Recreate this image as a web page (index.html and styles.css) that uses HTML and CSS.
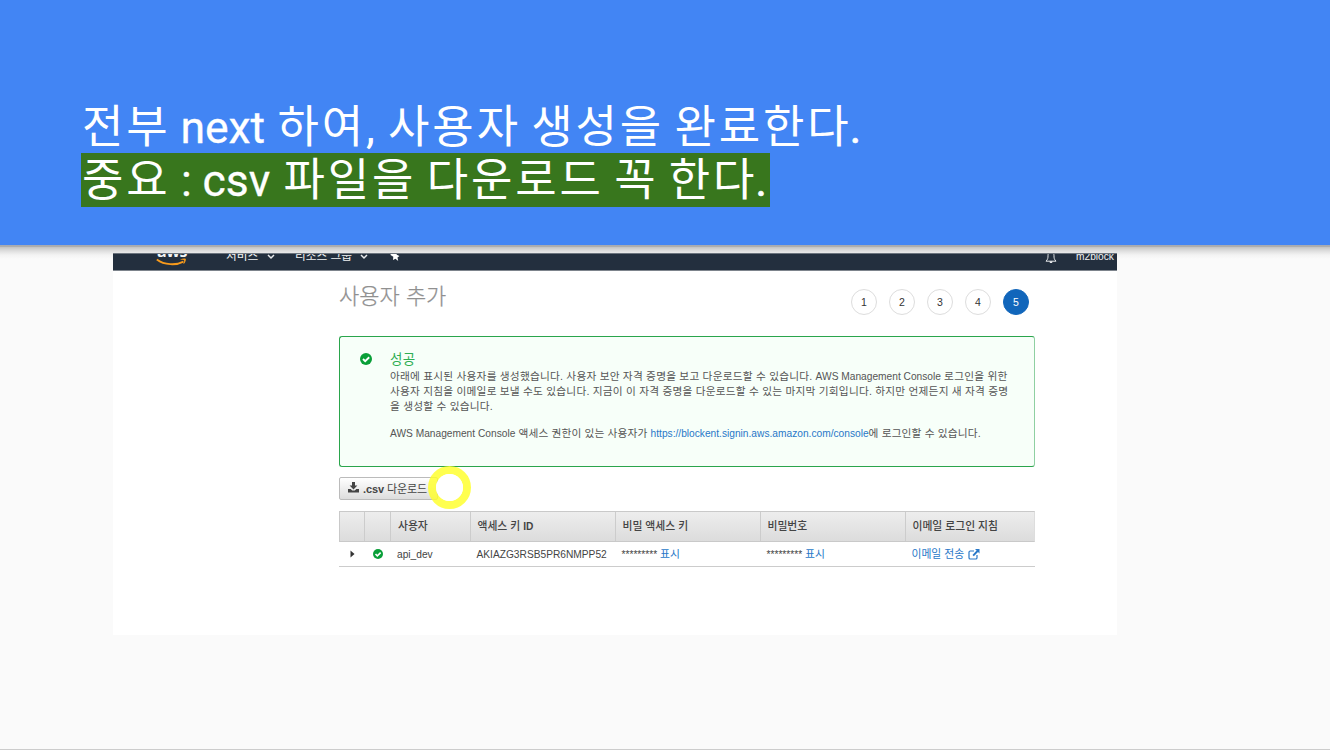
FILE: index.html
```html
<!DOCTYPE html>
<html lang="ko">
<head>
<meta charset="utf-8">
<title>사용자 추가</title>
<link rel="stylesheet" href="styles.css">
</head>
<body>
<main class="slide">
  <header class="hero">
    <h1 class="title">
      <span class="title-line">전부 <span class="latin">next</span> 하여, 사용자 생성을 완료한다<span class="stop">.</span></span>
      <span class="title-line marked">중요 <span class="latin colon">:</span> <span class="latin csv">csv</span> 파일을 다운로드 꼭 한다<span class="stop">.</span></span>
    </h1>
  </header>
  <div class="shade"></div>
  <section class="shot">
    <nav class="nav">
      <div class="brand">
        <span class="aws">aws</span>
        <svg class="smile" width="32" height="10" viewBox="0 0 32 10"><path d="M.8 1.500C8.500 7.200 20 7.600 27.500 3.600" fill="none" stroke="#f79a1c" stroke-width="1.800"/><path d="M24.500 1.400c2-1 4.800-1.100 5.300-.4.300.9-.4 3.600-2 5l-.4-.3c.6-1.300 1-2.800.7-3.300-.5-.5-2.200-.6-3.500-.5z" fill="#f79a1c"/></svg>
      </div>
      <span class="nav-item services">서비스</span>
      <svg class="chev c1" width="8" height="6" viewBox="0 0 8 6"><path d="M1 1l3 3 3-3" fill="none" stroke="#e8eaec" stroke-width="1.500"/></svg>
      <span class="nav-item groups">리소스 그룹</span>
      <svg class="chev c2" width="8" height="6" viewBox="0 0 8 6"><path d="M1 1l3 3 3-3" fill="none" stroke="#e8eaec" stroke-width="1.500"/></svg>
      <svg class="pin" width="10" height="10" viewBox="0 0 10 10"><path d="M1 0h5l.8 2.700 2.700 1.300-2 1.500.7 3.600-2.700-2.300-2.500 1.300.300-3.300L.5 3z" fill="#fff"/></svg>
      <svg class="bell" width="12" height="13" viewBox="0 0 12 13"><path d="M1 10.200c2-2 2-3.500 2-5.400C3 1.500 4.500 1 6 1s3 .5 3 3.800c0 1.900 0 3.400 2 5.400z" fill="none" stroke="#e6e8ea"/><path d="M4.500 10.500h3a1.500 1.500 0 0 1-3 0z" fill="#fff"/></svg>
      <span class="account">m2block</span>
    </nav>
    <div class="content">
      <div class="page-head">
        <h2 class="page-title">사용자 추가</h2>
        <ol class="steps">
          <li class="step">1</li><li class="step">2</li><li class="step">3</li><li class="step">4</li><li class="step active">5</li>
        </ol>
      </div>
      <div class="alert">
        <svg class="ok ok-big" viewBox="0 0 12 12"><circle cx="6" cy="6" r="6" fill="#099f38"/><path d="M3 6l2.200 2.200L9.200 4.300" fill="none" stroke="#fff" stroke-width="1.900"/></svg>
        <div class="alert-text">
          <h3 class="alert-title">성공</h3>
          <p class="para">
            <span class="row">아래에 표시된 사용자를 생성했습니다. 사용자 보안 자격 증명을 보고 다운로드할 수 있습니다. <span class="en">AWS Management Console</span> 로그인을 위한</span>
            <span class="row">사용자 지침을 이메일로 보낼 수도 있습니다. 지금이 이 자격 증명을 다운로드할 수 있는 마지막 기회입니다. 하지만 언제든지 새 자격 증명</span>
            <span class="row">을 생성할 수 있습니다.</span>
          </p>
          <p class="para">
            <span class="row last"><span class="en">AWS Management Console</span> 액세스 권한이 있는 사용자가 <a class="link en">https://blockent.signin.aws.amazon.com/console</a>에 로그인할 수 있습니다.</span>
          </p>
        </div>
      </div>
      <div class="actions">
        <div class="button">
          <svg class="dl" width="11" height="11" viewBox="0 0 11 11"><path d="M4 0h3v3.600h2.400L5.500 7.500 1.600 3.600H4z" fill="#444"/><path d="M0 7h2.700l1.500 1.400h2.600L8.300 7H11v3.500H0z" fill="#444"/></svg>
          <span class="button-label"><b>.csv</b> 다운로드</span>
          <span class="ring"></span>
        </div>
      </div>
      <div class="table">
        <div class="tr head">
          <span class="cell"></span><span class="cell"></span><span class="cell">사용자</span><span class="cell">액세스 키 <b>ID</b></span><span class="cell">비밀 액세스 키</span><span class="cell">비밀번호</span><span class="cell">이메일 로그인 지침</span>
        </div>
        <div class="tr data">
          <span class="cell icon-cell"><svg width="5" height="8" viewBox="0 0 5 8"><path d="M.5.500L4.500 4l-4 3.500z" fill="#333"/></svg></span>
          <span class="cell icon-cell"><svg class="ok ok-small" viewBox="0 0 12 12"><circle cx="6" cy="6" r="6" fill="#099f38"/><path d="M3 6l2.200 2.200L9.200 4.300" fill="none" stroke="#fff" stroke-width="1.900"/></svg></span>
          <span class="cell user">api_dev</span>
          <span class="cell key">AKIAZG3RSB5PR6NMPP52</span>
          <span class="cell"><span class="stars">*********</span> <a class="link show">표시</a></span>
          <span class="cell"><span class="stars">*********</span> <a class="link show">표시</a></span>
          <span class="cell"><a class="link mail">이메일 전송</a><svg class="ext" width="12" height="11" viewBox="0 0 12 11"><path d="M6 2H2.300Q1 2 1 3.300V8.700Q1 10 2.300 10H7.700Q9 10 9 8.700V6" fill="none" stroke="#2878c8" stroke-width="1.200"/><path d="M7 0h4.500v4.500L10 3 5.800 7.200 4.500 5.900 8.600 1.600z" fill="#2878c8"/></svg></span>
        </div>
      </div>
    </div>
  </section>
</main>
</body>
</html>
```

FILE: styles.css
```css
* { box-sizing: border-box; margin: 0; padding: 0; }
body { width: 1330px; height: 750px; overflow: hidden; background: #fafafa; font-family: "Liberation Sans", "Noto Sans CJK KR", sans-serif; }
.slide { height: 750px; border-bottom: 1px solid #ccc; }
.hero { height: 245px; padding: 100px 0 0 81px; background: #4285f4; }
.shade { height: 14px; background: linear-gradient(#a4a9b4 0, #adadad 1.5px, #c6c6c6 2.5px, #d2d2d2 4px, #e4e4e4 7px, #f3f3f3 10px, #fafafa 14px); }
.title { display: flex; flex-direction: column; align-items: flex-start; font: 400 45px/53px Roboto, "Noto Sans CJK KR", sans-serif; letter-spacing: 2.9px; word-spacing: -3.8px; color: #fff; white-space: nowrap; }
.title-line { height: 53px; padding-left: 1px; line-height: 55px; }
.latin { margin: 0 2px 0 -.5px; font-size: 44.5px; letter-spacing: 0; -webkit-text-stroke: .3px #fff; }
.csv { margin: 0 3px 0 .5px; }
.colon { margin: 0; }
.stop { margin-left: -2px; -webkit-text-stroke: .6px #fff; }
.marked { height: 54px; background: #38761d; }
.shot { position: relative; display: flex; flex-direction: column; width: 1004px; height: 382px; margin: -6px 0 0 113px; background: #fff; overflow: hidden; }
.nav { display: flex; align-items: flex-start; height: 18px; background: #232f3e; border-top: 1px solid #6b737d; border-bottom: 1px solid #7d848c; overflow: hidden; color: #f2f3f4; font-size: 11.7px; line-height: 14px; white-space: nowrap; }
.brand { display: flex; flex-direction: column; width: 32px; margin: -10px 0 0 43px; }
.aws { height: 14px; padding-left: 1px; font: 700 16px/15px "Open Sans", sans-serif; letter-spacing: -.4px; }
.smile { display: block; }
.nav-item { margin-top: -5px; }
.services { width: 33px; margin-left: 38px; }
.groups { width: 58px; margin-left: 20px; }
.chev { margin-top: 0; }
.c1 { margin-left: 8px; }
.c2 { margin-left: 7px; }
.pin { margin: -2px 0 0 22px; }
.bell { margin: -3px 0 0 auto; }
.account { width: 41px; margin: -4px 0 0 19px; font-size: 10.2px; }
.content { width: 696px; margin-left: 226px; }
.page-head { display: flex; justify-content: space-between; height: 65px; padding-right: 6px; }
.page-title { margin-top: 8px; font: 300 22px/30px "Noto Sans CJK KR", sans-serif; color: #909090; -webkit-text-stroke: .25px #909090; white-space: nowrap; }
.steps { display: flex; gap: 12px; margin-top: 18px; list-style: none; }
.step { width: 26px; height: 26px; border: 1px solid #ddd; border-radius: 50%; font-size: 10.500px; line-height: 25px; text-align: center; color: #333; }
.step.active { border-color: #1166bb; background: #1166bb; color: #fff; }
.alert { display: flex; height: 131px; padding: 15px 0 0 20px; border: 1px solid #2aa54c; border-right-color: #8fd0a2; border-radius: 3px; background: #f7fff9; }
.ok { display: block; flex: none; }
.ok-big { width: 12px; height: 12px; margin-top: 1px; }
.ok-small { width: 10px; height: 10px; }
.alert-text { margin-left: 18px; font-size: 10.700px; line-height: 15px; letter-spacing: .2px; color: #555; white-space: nowrap; }
.last { letter-spacing: .14px; }
.en { font-size: 10.200px; letter-spacing: 0; }
.alert-title { height: 17px; font-size: 13.500px; font-weight: 400; line-height: 16px; letter-spacing: .3px; color: #2fae54; }
.para { margin-bottom: 12px; }
.row { display: block; height: 15px; }
.link { color: #2878c8; text-decoration: none; }
.actions { display: flex; height: 44px; padding-top: 10px; }
.button { position: relative; display: flex; align-items: center; width: 99px; height: 23px; padding: 0 0 2px 8px; border: 1px solid #bbb; border-radius: 2px; background: linear-gradient(#fff, #ddd); font-size: 11px; color: #444; white-space: nowrap; }
.button-label { margin-left: 4px; letter-spacing: -.1px; }
.ring { position: absolute; left: 88px; top: -12px; width: 43px; height: 43px; border: 8px solid rgba(255,255,40,.82); border-radius: 50%; }
.ring::before { content: ""; position: absolute; inset: 0; border-radius: 50%; background: #fff; }
.table { width: 696px; font-size: 10.200px; color: #444; white-space: nowrap; }
.tr { display: grid; grid-template-columns: 25px 26px 79.500px 145px 145px 145px 1fr; }
.head { height: 31px; border: 1px solid #c9c9c9; border-right-color: #ddd; background: linear-gradient(#ededed, #dcdcdc); font-size: 10.800px; font-weight: 500; line-height: 29px; }
.head b { font-size: 10.200px; }
.head .cell { padding-left: 7px; border-right: 1px solid #ccc; }
.head .cell:last-child { border-right: 0; }
.data { height: 25px; padding-left: 1px; border-bottom: 1px solid #ccc; line-height: 24px; }
.data .cell { padding-left: 6px; }
.data .icon-cell { display: flex; align-items: center; justify-content: center; height: 24px; padding: 0; }
.user, .key { line-height: 25px; }
.show, .mail { font-size: 10.800px; }
.ext { margin-left: 4px; vertical-align: -2px; }
```
